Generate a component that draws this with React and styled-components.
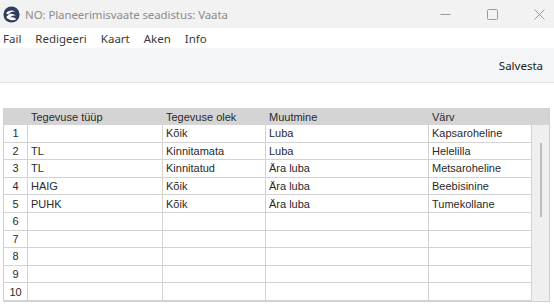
import React from "react";
import styled, { createGlobalStyle } from "styled-components";

const GlobalStyle = createGlobalStyle`
  html, body {
    margin: 0;
    padding: 0;
    background: #ffffff;
  }
`;

const columns = [
  { title: "Tegevuse tüüp", width: 135 },
  { title: "Tegevuse olek", width: 103 },
  { title: "Muutmine", width: 163 },
  { title: "Värv", width: 103 },
];

const rows = [
  ["", "Kõik", "Luba", "Kapsaroheline"],
  ["TL", "Kinnitamata", "Luba", "Helelilla"],
  ["TL", "Kinnitatud", "Ära luba", "Metsaroheline"],
  ["HAIG", "Kõik", "Ära luba", "Beebisinine"],
  ["PUHK", "Kõik", "Ära luba", "Tumekollane"],
  ["", "", "", ""],
  ["", "", "", ""],
  ["", "", "", ""],
  ["", "", "", ""],
  ["", "", "", ""],
];

function AppIcon() {
  return (
    <svg width="17" height="17" viewBox="0 0 20 20">
      <circle cx="10" cy="10" r="9.5" fill="#2f3d5c" />
      <path
        d="M3.5 8.5 C6 5 11 4.5 14.5 6.5 C11.5 6 8 7 6.5 9.5 C9 8.5 13 9 15.5 11.5 C13 10.8 10 11.5 8.5 13.5 C11 13 14 13.8 15.5 15.5 C12 17.5 6 17 3.8 13 C5 11 7 10.3 8 10.2 C6.5 9.8 4.8 9.6 3.5 8.5 Z"
        fill="#ffffff"
      />
    </svg>
  );
}

function App() {
  return (
    <>
      <GlobalStyle />
      <Window>
        <TitleBar>
          <TitleLeft>
            <AppIcon />
            <TitleText>NO: Planeerimisvaate seadistus: Vaata</TitleText>
          </TitleLeft>
          <WindowControls>
            <ControlButton aria-label="minimize">
              <svg width="11" height="11" viewBox="0 0 11 11">
                <line x1="0.5" y1="5.5" x2="10.5" y2="5.5" stroke="#9a9a9a" strokeWidth="1" />
              </svg>
            </ControlButton>
            <ControlButton aria-label="maximize">
              <svg width="11" height="11" viewBox="0 0 11 11">
                <rect x="0.5" y="0.5" width="10" height="10" rx="1" fill="none" stroke="#9a9a9a" strokeWidth="1" />
              </svg>
            </ControlButton>
            <ControlButton aria-label="close">
              <svg width="11" height="11" viewBox="0 0 11 11">
                <path d="M0.5 0.5 L10.5 10.5 M10.5 0.5 L0.5 10.5" stroke="#9a9a9a" strokeWidth="1" />
              </svg>
            </ControlButton>
          </WindowControls>
        </TitleBar>

        <MenuBar>
          {["Fail", "Redigeeri", "Kaart", "Aken", "Info"].map((m) => (
            <MenuItem key={m}>{m}</MenuItem>
          ))}
        </MenuBar>

        <Toolbar>
          <ToolButton>Salvesta</ToolButton>
        </Toolbar>

        <Content>
          <Grid>
            <HeaderCell />
            {columns.map((c) => (
              <HeaderCell key={c.title}>{c.title}</HeaderCell>
            ))}
            <HeaderCell />

            {rows.map((row, i) => (
              <React.Fragment key={i}>
                <NumCell>{i + 1}</NumCell>
                {row.map((v, j) => (
                  <Cell key={j}>{v}</Cell>
                ))}
                {i === 0 && (
                  <ScrollTrack>
                    <ScrollThumb />
                  </ScrollTrack>
                )}
              </React.Fragment>
            ))}
          </Grid>
        </Content>
      </Window>
    </>
  );
}

const Window = styled.div`
  width: 554px;
  height: 308px;
  display: flex;
  flex-direction: column;
  overflow: hidden;
  background: #ffffff;
  font-family: "Segoe UI", "Noto Sans", "Liberation Sans", sans-serif;
`;

const TitleBar = styled.div`
  height: 28px;
  display: flex;
  align-items: center;
  justify-content: space-between;
  background: #f2f2f2;
  padding-left: 3px;
`;

const TitleLeft = styled.div`
  display: flex;
  align-items: center;
  gap: 5px;
`;

const TitleText = styled.span`
  font-size: 11.5px;
  color: #8c8c8c;
  letter-spacing: -0.1px;
`;

const WindowControls = styled.div`
  display: flex;
  align-items: center;
  gap: 36px;
  height: 100%;
  padding-right: 9px;
`;

const ControlButton = styled.div`
  width: 11px;
  height: 100%;
  display: flex;
  align-items: center;
  justify-content: center;
`;

const MenuBar = styled.div`
  height: 20px;
  display: flex;
  align-items: center;
  gap: 14px;
  padding-left: 3px;
  background: #ffffff;
`;

const MenuItem = styled.span`
  font-size: 11.5px;
  color: #3a3a3a;
`;

const Toolbar = styled.div`
  height: 34px;
  display: flex;
  align-items: center;
  justify-content: flex-end;
  padding-right: 11px;
  background: #f4f5f6;
  border-bottom: 1px solid #e2e2e2;
`;

const ToolButton = styled.span`
  font-size: 11.5px;
  color: #222222;
`;

const Content = styled.div`
  padding: 25px 0 0 3px;
`;

const Grid = styled.div`
  display: grid;
  grid-template-columns: 24px ${columns.map((c) => `${c.width}px`).join(" ")} 17px;
  grid-template-rows: 17px repeat(10, 17.6px);
  width: fit-content;
  border-left: 1px solid #d0d0d0;
  border-right: 1px solid #d0d0d0;
  border-bottom: 1px solid #d0d0d0;
  font-family: "Liberation Sans", Arial, sans-serif;
  font-size: 11px;
  color: #2a2a2a;
`;

const HeaderCell = styled.div`
  background: #d4d4d4;
  display: flex;
  align-items: center;
  padding-left: 3px;
  color: #2a2a2a;
`;

const Cell = styled.div`
  display: flex;
  align-items: center;
  padding-left: 3px;
  border-right: 1px solid #d3d3d3;
  border-bottom: 1px solid #d3d3d3;
  white-space: nowrap;
  overflow: hidden;
`;

const NumCell = styled(Cell)`
  justify-content: center;
  padding-left: 0;
`;

const ScrollTrack = styled.div`
  grid-column: 6;
  grid-row: 2 / span 10;
  background: #efefef;
  position: relative;
`;

const ScrollThumb = styled.div`
  position: absolute;
  left: 8px;
  top: 18px;
  width: 2px;
  height: 74px;
  background: #bdbdbd;
`;

export default App;
